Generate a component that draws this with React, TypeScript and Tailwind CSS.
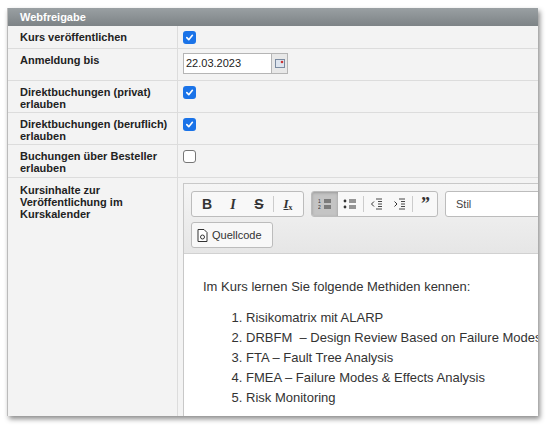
import React from "react";

const font = { fontFamily: '"Liberation Sans", Arial, sans-serif' };

function Check({ on }: { on: boolean }) {
  return on ? (
    <span className="flex h-[13px] w-[13px] items-center justify-center rounded-[3px] bg-[#1a73e8]">
      <svg width="9" height="9" viewBox="0 0 10 10">
        <path d="M2 5.2 L4.2 7.4 L8.2 2.6" stroke="white" strokeWidth="1.8" fill="none" strokeLinecap="round" strokeLinejoin="round" />
      </svg>
    </span>
  ) : (
    <span className="block h-[13px] w-[13px] rounded-[3px] border border-[#767676] bg-white" />
  );
}

function Row(props: { label: React.ReactNode; h: string; children: React.ReactNode }) {
  return (
    <div className={`flex border-b border-[#dcdcdc] ${props.h}`}>
      <div className="w-[170px] shrink-0 border-r border-[#dcdcdc] pl-[12px] pt-[5px] text-[11px] font-bold leading-[12px] text-[#222]">
        {props.label}
      </div>
      <div className="pl-[5px] pt-[5px]">{props.children}</div>
    </div>
  );
}

function TB({ children, active, w = "w-[26px]" }: { children: React.ReactNode; active?: boolean; w?: string }) {
  return (
    <span className={`flex h-[24px] ${w} items-center justify-center text-[#333] ${active ? "bg-[#c4c4c4] shadow-[inset_0_1px_3px_#999]" : ""}`}>
      {children}
    </span>
  );
}

const Sep = () => <span className="mx-[1px] h-[16px] w-px bg-[#ccc]" />;

function ListIcon({ numbered }: { numbered?: boolean }) {
  return (
    <svg width="14" height="12" viewBox="0 0 14 12">
      {numbered ? (
        <>
          <text x="0" y="5" fontSize="5" fill="#333" style={font}>1</text>
          <text x="0" y="11" fontSize="5" fill="#333" style={font}>2</text>
        </>
      ) : (
        <>
          <circle cx="2" cy="3" r="1.4" fill="#333" />
          <circle cx="2" cy="9" r="1.4" fill="#333" />
        </>
      )}
      <path d="M6 2h7M6 4h7M6 8h7M6 10h7" stroke="#333" strokeWidth="1" />
    </svg>
  );
}

function IndentIcon({ out }: { out?: boolean }) {
  return (
    <svg width="13" height="12" viewBox="0 0 13 12">
      <path d="M6 1h6M8 3.5h4M8 6h4M8 8.5h4M6 11h6" stroke="#333" strokeWidth="0.9" />
      {out ? <path d="M4 3.5L1.5 6L4 8.5" stroke="#333" fill="none" strokeWidth="1" /> : <path d="M1.5 3.5L4 6L1.5 8.5" stroke="#333" fill="none" strokeWidth="1" />}
    </svg>
  );
}

export default function App() {
  return (
    <div className="h-[430px] w-[552px] overflow-hidden bg-white pl-[7px] pt-[8px]" style={font}>
      <div className="h-[408px] w-[531px] overflow-hidden border-l border-[#bbb] bg-[#f3f3f3] shadow-[2px_3px_5px_rgba(0,0,0,0.45)]">
        <div className="h-[18px] bg-gradient-to-b from-[#9aa0a3] to-[#7d8386] pl-[12px] text-[11px] font-bold leading-[18px] text-white">
          Webfreigabe
        </div>
        <Row label="Kurs veröffentlichen" h="h-[23px]"><Check on /></Row>
        <Row label="Anmeldung bis" h="h-[32px]">
          <div className="-mt-[1px] flex h-[21px] w-[105px] border border-[#b5b5b5] bg-white">
            <span className="flex-1 pl-[2px] text-[11px] leading-[19px] text-[#222]">22.03.2023</span>
            <span className="flex w-[16px] items-center justify-center border-l border-[#b5b5b5] bg-[#e8e8e8]">
              <svg width="10" height="9" viewBox="0 0 10 9">
                <rect x="0.5" y="0.5" width="9" height="8" fill="#dde4ee" stroke="#7a8aa0" />
                <circle cx="7" cy="3" r="1.3" fill="#c33" />
              </svg>
            </span>
          </div>
        </Row>
        <Row label={<>Direktbuchungen (privat)<br />erlauben</>} h="h-[32px]"><Check on /></Row>
        <Row label={<>Direktbuchungen (beruflich)<br />erlauben</>} h="h-[32px]"><Check on /></Row>
        <Row label={<>Buchungen über Besteller<br />erlauben</>} h="h-[33px]"><Check on={false} /></Row>
        <div className="flex h-[240px]">
          <div className="w-[170px] shrink-0 border-r border-[#dcdcdc] pl-[12px] pt-[6px] text-[11px] font-bold leading-[12px] text-[#222]">
            Kursinhalte zur<br />Veröffentlichung im<br />Kurskalender
          </div>
          <div className="min-w-0 flex-1 overflow-hidden pl-[5px] pt-[5px]">
            <div className="h-[240px] w-[460px] border border-[#c8c8c8] bg-white">
              <div className="flex flex-col gap-[5px] border-b border-[#d1d1d1] bg-gradient-to-b from-[#f5f5f5] to-[#e6e6e6] px-[7px] pb-[5px] pt-[7px]">
                <div className="flex items-center gap-[7px]">
                  <div className="flex items-center rounded-[3px] border border-[#bcbcbc] bg-[#f8f8f8] px-[2px]">
                    <TB><b className="text-[14px]">B</b></TB>
                    <TB><i className="font-bold text-[14px]" style={{ fontFamily: '"Liberation Serif", serif' }}>I</i></TB>
                    <TB><s className="font-bold text-[14px]">S</s></TB>
                    <Sep />
                    <TB><span className="text-[13px] font-bold italic underline" style={{ fontFamily: '"Liberation Serif", serif' }}>I<sub className="text-[8px] not-italic">x</sub></span></TB>
                  </div>
                  <div className="flex items-center overflow-hidden rounded-[3px] border border-[#bcbcbc] bg-[#f8f8f8]">
                    <TB active><ListIcon numbered /></TB>
                    <TB w="w-[24px]"><ListIcon /></TB>
                    <Sep />
                    <TB w="w-[23px]"><IndentIcon out /></TB>
                    <TB w="w-[23px]"><IndentIcon /></TB>
                    <Sep />
                    <TB w="w-[23px]"><span className="text-[18px] font-bold leading-none" style={{ fontFamily: '"Liberation Serif", serif' }}>”</span></TB>
                  </div>
                  <div className="h-[26px] flex-1 rounded-[3px] border border-[#bcbcbc] bg-white pl-[10px] text-[11px] leading-[24px] text-[#444]">
                    Stil
                  </div>
                </div>
                <div className="flex h-[26px] w-[82px] items-center gap-[4px] rounded-[3px] border border-[#bcbcbc] bg-[#f8f8f8] pl-[5px] text-[11px] text-[#333]">
                  <svg width="11" height="13" viewBox="0 0 11 13">
                    <path d="M1 0.5h6l3 3v9H1z" fill="white" stroke="#333" />
                    <circle cx="5.5" cy="8" r="2" fill="none" stroke="#333" />
                  </svg>
                  Quellcode
                </div>
              </div>
              <div className="whitespace-nowrap pl-[19px] pt-[23px] text-[13px] leading-[20px] text-[#333]">
                <p>Im Kurs lernen Sie folgende Methiden kennen:</p>
                <ol className="mt-[11px] list-decimal pl-[43px]">
                  <li>Risikomatrix mit ALARP</li>
                  <li>DRBFM &nbsp;– Design Review Based on Failure Modes</li>
                  <li>FTA – Fault Tree Analysis</li>
                  <li>FMEA – Failure Modes &amp; Effects Analysis</li>
                  <li>Risk Monitoring</li>
                </ol>
              </div>
            </div>
          </div>
        </div>
      </div>
    </div>
  );
}
